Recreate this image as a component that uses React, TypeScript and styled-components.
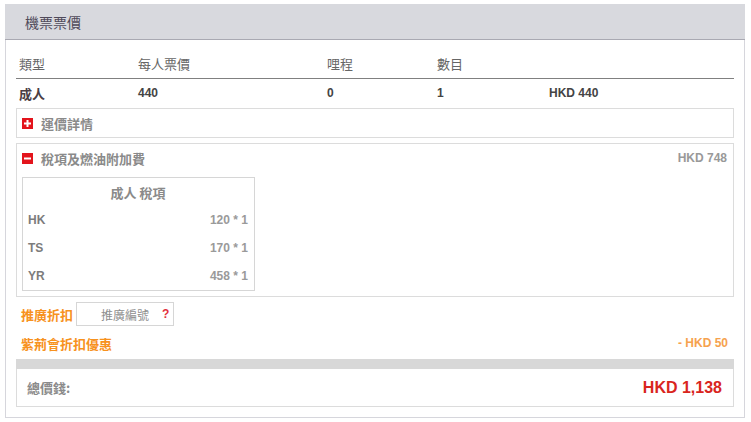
import React from "react";
import styled, { createGlobalStyle } from "styled-components";

const GlobalStyle = createGlobalStyle`
  body {
    margin: 0;
    background: #ffffff;
    font-family: "Liberation Sans", Arial, "Noto Sans CJK TC", sans-serif;
  }
`;

const Wrapper = styled.div`
  width: 740px;
  margin: 4px 0 0 5px;
`;

const Header = styled.div`
  height: 35px;
  background: #d8d9de;
  border-bottom: 1px solid #a9a9b2;
  display: flex;
  align-items: center;
  padding-left: 20px;
  font-family: "Noto Sans CJK TC", sans-serif;
  font-size: 14px;
  color: #4f4a5a;
`;

const Panel = styled.div`
  border: 1px solid #d6d6dc;
  border-top: none;
  padding: 9px 10px 10px 10px;
`;

const PriceGrid = styled.div`
  display: grid;
  grid-template-columns: 119px 189px 110px 112px 1fr;
`;

const HeadCell = styled.div`
  height: 29px;
  display: flex;
  align-items: center;
  padding-left: 3px;
  border-bottom: 1px solid #808080;
  font-family: "Noto Sans CJK TC", sans-serif;
  font-size: 13px;
  color: #666;
`;

const Cell = styled.div<{ cjk?: boolean }>`
  height: 28px;
  display: flex;
  align-items: center;
  padding-left: 3px;
  font-family: ${({ cjk }) =>
    cjk ? `"Noto Sans CJK TC", sans-serif` : `"Liberation Sans", Arial, sans-serif`};
  font-size: ${({ cjk }) => (cjk ? "13px" : "12px")};
  font-weight: bold;
  color: ${({ cjk }) => (cjk ? "#4a3e44" : "#444")};
`;

const SectionBox = styled.div<{ gap: number; open?: boolean }>`
  border: 1px solid #dcdcdc;
  margin-top: ${({ gap }) => gap}px;
  padding: 0 5px ${({ open }) => (open ? "5px" : "0")} 5px;
`;

const SectionHead = styled.div`
  height: 28px;
  display: flex;
  align-items: center;
  gap: 8px;
`;

const SectionTitle = styled.span`
  flex: 1;
  font-family: "Noto Sans CJK TC", sans-serif;
  font-size: 13px;
  font-weight: bold;
  color: #8a8a8a;
`;

const SectionAmount = styled.span`
  font-size: 12px;
  font-weight: bold;
  color: #999;
  padding-right: 1px;
`;

const TaxTable = styled.div`
  width: 233px;
  box-sizing: border-box;
  border: 1px solid #d6d6d6;
  margin-top: 5px;
  padding: 0 6px 0 5px;
`;

const TaxCaption = styled.div`
  height: 28px;
  display: flex;
  align-items: center;
  justify-content: center;
  font-family: "Noto Sans CJK TC", sans-serif;
  font-size: 13px;
  font-weight: bold;
  color: #8a8a8a;
`;

const TaxRow = styled.div`
  height: 28px;
  display: flex;
  align-items: center;
  justify-content: space-between;
  font-size: 12px;
  font-weight: bold;
`;

const TaxCode = styled.span`
  color: #7c7c7c;
`;

const TaxValue = styled.span`
  color: #9a9a9a;
`;

const PromoRow = styled.div`
  display: flex;
  align-items: center;
  gap: 3px;
  margin-top: 5px;
  padding-left: 5px;
`;

const OrangeLabel = styled.span`
  font-family: "Noto Sans CJK TC", sans-serif;
  font-size: 13px;
  font-weight: bold;
  color: #f7921e;
`;

const PromoInput = styled.div`
  width: 98px;
  height: 24px;
  border: 1px solid #d6d6d6;
  display: flex;
  align-items: center;
  padding-left: 24px;
  box-sizing: border-box;
  gap: 13px;
`;

const Placeholder = styled.span`
  font-family: "Noto Sans CJK TC", sans-serif;
  font-size: 12px;
  color: #8e8e8e;
`;

const Help = styled.span`
  font-size: 12px;
  font-weight: bold;
  color: #e2313d;
`;

const DiscountRow = styled.div`
  height: 24px;
  margin-top: 5px;
  display: flex;
  align-items: center;
  justify-content: space-between;
  padding: 0 6px 0 5px;
`;

const DiscountAmount = styled.span`
  font-size: 12px;
  font-weight: bold;
  color: #f6a24e;
`;

const GrayBar = styled.div`
  height: 10px;
  margin-top: 4px;
  background: #d8d8d8;
`;

const TotalBox = styled.div`
  height: 37px;
  border: 1px solid #dcdcdc;
  border-top: none;
  display: flex;
  align-items: center;
  justify-content: space-between;
  padding: 0 11px 0 10px;
`;

const TotalLabel = styled.span`
  font-family: "Noto Sans CJK TC", sans-serif;
  font-size: 13px;
  font-weight: bold;
  color: #8a8a8a;
`;

const TotalAmount = styled.span`
  font-size: 16px;
  font-weight: bold;
  color: #d9251d;
`;

const ToggleIcon: React.FC<{ open: boolean }> = ({ open }) => (
  <svg width="11" height="11" viewBox="0 0 11 11">
    <rect x="0" y="0" width="11" height="11" fill="#e3141c" />
    <rect x="2" y="4.5" width="7" height="2" fill="#ffffff" />
    {!open && <rect x="4.5" y="2" width="2" height="7" fill="#ffffff" />}
  </svg>
);

const taxes = [
  { code: "HK", amount: 120, count: 1 },
  { code: "TS", amount: 170, count: 1 },
  { code: "YR", amount: 458, count: 1 },
];

const App: React.FC = () => {
  return (
    <>
      <GlobalStyle />
      <Wrapper>
        <Header>機票票價</Header>
        <Panel>
          <PriceGrid>
            <HeadCell>類型</HeadCell>
            <HeadCell>每人票價</HeadCell>
            <HeadCell>哩程</HeadCell>
            <HeadCell>數目</HeadCell>
            <HeadCell />
            <Cell cjk>成人</Cell>
            <Cell>440</Cell>
            <Cell>0</Cell>
            <Cell>1</Cell>
            <Cell>HKD 440</Cell>
          </PriceGrid>

          <SectionBox gap={1}>
            <SectionHead>
              <ToggleIcon open={false} />
              <SectionTitle>運價詳情</SectionTitle>
            </SectionHead>
          </SectionBox>

          <SectionBox gap={5} open>
            <SectionHead>
              <ToggleIcon open />
              <SectionTitle>稅項及燃油附加費</SectionTitle>
              <SectionAmount>HKD 748</SectionAmount>
            </SectionHead>
            <TaxTable>
              <TaxCaption>成人 稅項</TaxCaption>
              {taxes.map((t) => (
                <TaxRow key={t.code}>
                  <TaxCode>{t.code}</TaxCode>
                  <TaxValue>
                    {t.amount} * {t.count}
                  </TaxValue>
                </TaxRow>
              ))}
            </TaxTable>
          </SectionBox>

          <PromoRow>
            <OrangeLabel>推廣折扣</OrangeLabel>
            <PromoInput>
              <Placeholder>推廣編號</Placeholder>
              <Help>?</Help>
            </PromoInput>
          </PromoRow>

          <DiscountRow>
            <OrangeLabel>紫荊會折扣優惠</OrangeLabel>
            <DiscountAmount>- HKD 50</DiscountAmount>
          </DiscountRow>

          <GrayBar />
          <TotalBox>
            <TotalLabel>總價錢:</TotalLabel>
            <TotalAmount>HKD 1,138</TotalAmount>
          </TotalBox>
        </Panel>
      </Wrapper>
    </>
  );
};

export default App;
